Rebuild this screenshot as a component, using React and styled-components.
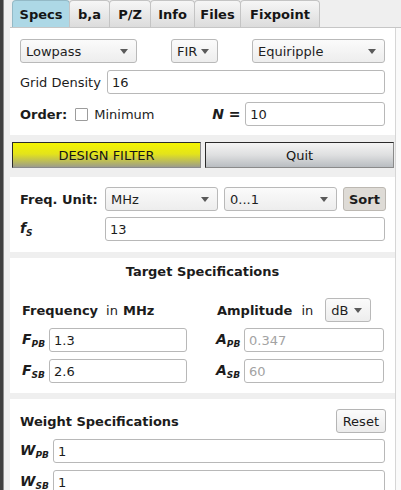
import React from "react";
import styled, {createGlobalStyle} from "styled-components";

const GlobalStyle = createGlobalStyle`
    html, body {
        margin: 0;
        padding: 0;
        background: #efefef;
    }
    body {
        font-family: "DejaVu Sans", "Noto Sans", sans-serif;
        font-size: 13px;
        color: #1c1c1c;
    }
`;

const Page = styled.div`
    width: 401px;
    height: 490px;
    display: flex;
    overflow: hidden;
    background: #efefef;
`;
const EdgeStrip = styled.div`
    width: 4px;
    flex-shrink: 0;
    background: linear-gradient(to right, #3f3f3f 0 3px, #8d8d8d 3px 4px);
`;
const Main = styled.div`
    flex: 1;
    min-width: 0;
    display: flex;
    flex-direction: column;
    padding-left: 6px;
`;
const TabBar = styled.div`
    display: flex;
    height: 27px;
    padding-left: 3px;
    flex-shrink: 0;
`;
const Tab = styled.div`
    width: ${({w}) => w}px;
    height: 27px;
    box-sizing: border-box;
    display: flex;
    align-items: center;
    justify-content: center;
    font-weight: bold;
    color: #151515;
    margin-left: -1px;
    border: 1px solid ${({active}) => (active ? "#93b9c6" : "#c4c4c4")};
    border-bottom: none;
    border-radius: 4px 4px 0 0;
    background: ${({active}) => (active ? "#add8e6" : "linear-gradient(#f6f6f6, #dcdcdc)")};
`;
const Panel = styled.div`
    flex: 1;
    display: flex;
    border-top: 1px solid #c6c6c6;
`;
const Column = styled.div`
    width: 385px;
    display: flex;
    flex-direction: column;
`;
const Gutter = styled.div`
    flex: 1;
    background: #fafafa;
    border-left: 1px solid #d6d6d6;
`;
const Section = styled.div`
    background: #fff;
    margin-top: ${({mt}) => mt || 0}px;
    padding: ${({pad}) => pad};
    display: flex;
    flex-direction: column;
    gap: ${({gap}) => (gap === undefined ? 7 : gap)}px;
    flex-shrink: 0;
`;
const Row = styled.div`
    display: flex;
    align-items: center;
    height: 24px;
    justify-content: ${({spread}) => (spread ? "space-between" : "flex-start")};
    margin-top: ${({mt}) => mt || 0}px;
    gap: ${({gap}) => gap || 0}px;
`;
const Label = styled.span`
    width: ${({w}) => (w ? `${w}px` : "auto")};
    flex-shrink: 0;
    font-weight: ${({bold}) => (bold ? "bold" : "normal")};
    white-space: nowrap;
`;
const Sym = styled.span`
    width: ${({w}) => w}px;
    flex-shrink: 0;
    font-weight: bold;
    font-style: italic;
    font-size: 14px;
    padding-left: ${({pl}) => pl || 0}px;
    box-sizing: border-box;
    white-space: nowrap;
`;
const Sub = styled.span`
    font-size: 9px;
    vertical-align: -3px;
`;
const Upright = styled.span`
    font-style: normal;
`;
const Combo = styled.div`
    width: ${({w}) => w}px;
    height: 24px;
    box-sizing: border-box;
    flex-shrink: 0;
    display: flex;
    align-items: center;
    justify-content: space-between;
    padding: 0 8px 0 5px;
    border: 1px solid #b9b9b9;
    border-radius: 3px;
    background: linear-gradient(#fbfbfb, #ededed);
    color: #1e1e1e;
`;
const Arrow = styled.span`
    width: 0;
    height: 0;
    border-left: 4px solid transparent;
    border-right: 4px solid transparent;
    border-top: 5px solid #5a5a5a;
`;
const Field = styled.input`
    flex: 1;
    width: 0;
    min-width: 0;
    height: 24px;
    box-sizing: border-box;
    margin: 0 ${({mr}) => mr || 0}px 0 0;
    padding: 0 4px;
    font: inherit;
    color: ${({dim}) => (dim ? "#a3a3a3" : "#1c1c1c")};
    background: #fff;
    border: 1px solid #b8b8b8;
    border-radius: 3px;
    outline: none;
`;
const Check = styled.span`
    width: 13px;
    height: 13px;
    box-sizing: border-box;
    border: 1px solid #9c9c9c;
    border-radius: 1px;
    background: #fff;
    margin: 0 6px 0 8px;
    flex-shrink: 0;
`;
const ButtonRow = styled.div`
    display: flex;
    gap: 4px;
    margin: 7px 1px 9px 2px;
    flex-shrink: 0;
`;
const BigButton = styled.div`
    flex: 1;
    height: 26px;
    box-sizing: border-box;
    display: flex;
    align-items: center;
    justify-content: center;
    color: #151515;
    border: 1px solid #2a2a2a;
    border-right-color: #8a8a8a;
    border-bottom-color: #8a8a8a;
    background: ${({yellow}) => (yellow ? "linear-gradient(#f4f400 0%, #e4e41a 45%, #9d9d8a 100%)" : "linear-gradient(#f4f4f4 0%, #dedfe0 50%, #b9bdc1 100%)")};
`;
const SmallButton = styled.div`
    height: 24px;
    box-sizing: border-box;
    flex-shrink: 0;
    padding: 0 ${({bold}) => (bold ? 5 : 6)}px;
    margin-right: ${({mr}) => mr || 0}px;
    display: flex;
    align-items: center;
    font-weight: ${({bold}) => (bold ? "bold" : "normal")};
    border: 1px solid ${({bold}) => (bold ? "#bcb8b2" : "#b5b5b5")};
    border-radius: 3px;
    background: ${({bold}) => (bold ? "#dedbd6" : "linear-gradient(#fbfbfb, #ebebeb)")};
`;
const Title = styled.div`
    font-weight: bold;
    text-align: center;
    line-height: 16px;
    margin-bottom: 18px;
`;
const SpecGrid = styled.div`
    display: grid;
    grid-template-columns: 167px minmax(0, 1fr);
    column-gap: 29px;
`;
const Col = styled.div`
    display: flex;
    flex-direction: column;
    gap: 6px;
    min-width: 0;
`;
const Plain = styled.span`
    margin: 0 ${({mr}) => mr || 0}px 0 ${({ml}) => ml || 0}px;
    font-weight: ${({bold}) => (bold ? "bold" : "normal")};
    white-space: nowrap;
`;

const tabs = [
    ["Specs", 58, true],
    ["b,a", 41],
    ["P/Z", 42],
    ["Info", 45],
    ["Files", 47],
    ["Fixpoint", 80],
];

const App = () => {
    return (
        <Page>
            <GlobalStyle />
            <EdgeStrip />
            <Main>
                <TabBar>
                    {tabs.map(([name, w, active]) => (
                        <Tab key={name} w={w} active={active}>
                            {name}
                        </Tab>
                    ))}
                </TabBar>
                <Panel>
                    <Column>
                        {/* filter type */}
                        <Section pad="11px 10px 9px 10px">
                            <Row spread>
                                <Combo w={117}>
                                    Lowpass <Arrow />
                                </Combo>
                                <Combo w={47}>
                                    FIR <Arrow />
                                </Combo>
                                <Combo w={133}>
                                    Equiripple <Arrow />
                                </Combo>
                            </Row>
                            <Row>
                                <Label w={87}>Grid Density</Label>
                                <Field readOnly value="16" />
                            </Row>
                            <Row mt={1}>
                                <Label bold>Order:</Label>
                                <Check />
                                <Label w={118}>Minimum</Label>
                                <Sym w={33}>
                                    N <Upright>=</Upright>
                                </Sym>
                                <Field readOnly value="10" />
                            </Row>
                        </Section>

                        <ButtonRow>
                            <BigButton yellow>DESIGN FILTER</BigButton>
                            <BigButton>Quit</BigButton>
                        </ButtonRow>

                        {/* frequency unit */}
                        <Section pad="10px 9px 11px 10px" gap={6}>
                            <Row gap={6}>
                                <Label bold w={79}>Freq. Unit:</Label>
                                <Combo w={113}>
                                    MHz <Arrow />
                                </Combo>
                                <Combo w={113}>
                                    0...1 <Arrow />
                                </Combo>
                                <SmallButton bold>Sort</SmallButton>
                            </Row>
                            <Row>
                                <Sym w={85}>
                                    f<Sub>S</Sub>
                                </Sym>
                                <Field readOnly value="13" mr={1} />
                            </Row>
                        </Section>

                        {/* target specs */}
                        <Section mt={6} pad="6px 10px 10px 10px" gap={0}>
                            <Title>Target Specifications</Title>
                            <SpecGrid>
                                <Col>
                                    <Row>
                                        <Plain bold ml={2} mr={8}>Frequency</Plain>
                                        <Plain mr={5}>in</Plain>
                                        <Plain bold>MHz</Plain>
                                    </Row>
                                    <Row>
                                        <Sym w={29} pl={2}>
                                            F<Sub>PB</Sub>
                                        </Sym>
                                        <Field readOnly value="1.3" />
                                    </Row>
                                    <Row mt={1}>
                                        <Sym w={29} pl={2}>
                                            F<Sub>SB</Sub>
                                        </Sym>
                                        <Field readOnly value="2.6" />
                                    </Row>
                                </Col>
                                <Col>
                                    <Row>
                                        <Plain bold ml={1} mr={9}>Amplitude</Plain>
                                        <Plain mr={12}>in</Plain>
                                        <Combo w={46}>
                                            dB <Arrow />
                                        </Combo>
                                    </Row>
                                    <Row>
                                        <Sym w={28}>
                                            A<Sub>PB</Sub>
                                        </Sym>
                                        <Field readOnly dim value="0.347" mr={1} />
                                    </Row>
                                    <Row mt={1}>
                                        <Sym w={28}>
                                            A<Sub>SB</Sub>
                                        </Sym>
                                        <Field readOnly dim value="60" mr={1} />
                                    </Row>
                                </Col>
                            </SpecGrid>
                        </Section>

                        {/* weights */}
                        <Section mt={6} pad="10px 10px 10px 10px" gap={6}>
                            <Row spread>
                                <Label bold>Weight Specifications</Label>
                                <SmallButton mr={-1}>Reset</SmallButton>
                            </Row>
                            <Row>
                                <Sym w={33}>
                                    W<Sub>PB</Sub>
                                </Sym>
                                <Field readOnly value="1" />
                            </Row>
                            <Row mt={1}>
                                <Sym w={33}>
                                    W<Sub>SB</Sub>
                                </Sym>
                                <Field readOnly value="1" />
                            </Row>
                        </Section>
                    </Column>
                    <Gutter />
                </Panel>
            </Main>
        </Page>
    );
};

export default App;
